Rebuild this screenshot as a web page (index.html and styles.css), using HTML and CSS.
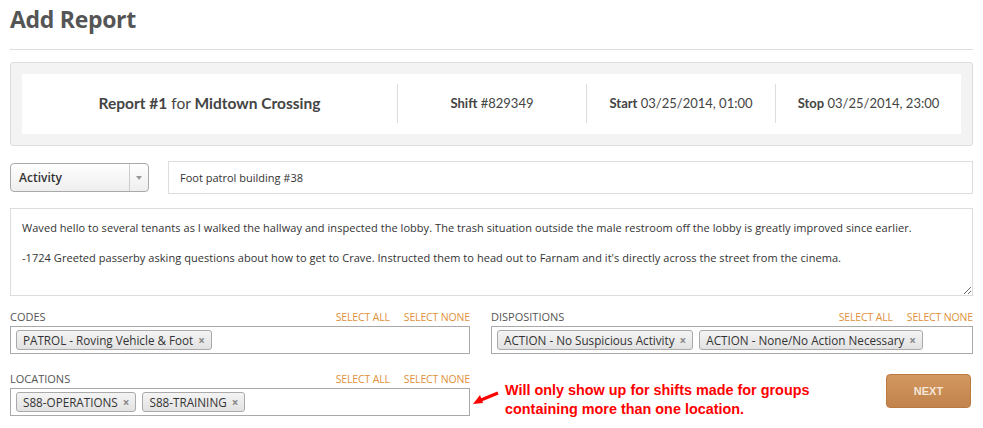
FILE: index.html
```html
<!DOCTYPE html>
<html lang="en">
<head>
    <meta charset="UTF-8">
    <meta name="viewport" content="width=device-width, initial-scale=1.0">
    <title>Add Report</title>
    <link rel="stylesheet" href="styles.css">
</head>
<body>
    <div class="page">
        <h1>Add Report</h1>

        <div class="summary">
            <div class="summary-card">
                <div class="summary-item wide"><b>Report #1</b> for <b>Midtown Crossing</b></div>
                <div class="summary-item"><b>Shift</b> #829349</div>
                <div class="summary-item"><b>Start</b> 03/25/2014, 01:00</div>
                <div class="summary-item last"><b>Stop</b> 03/25/2014, 23:00</div>
            </div>
        </div>

        <div class="entry-row">
            <div class="select">
                <span class="select-value">Activity</span>
                <span class="select-arrow"></span>
            </div>
            <input class="title-input" type="text" value="Foot patrol building #38">
        </div>

        <textarea class="notes" rows="5">Waved hello to several tenants as I walked the hallway and inspected the lobby. The trash situation outside the male restroom off the lobby is greatly improved since earlier.

-1724 Greeted passerby asking questions about how to get to Crave. Instructed them to head out to Farnam and it's directly across the street from the cinema.</textarea>

        <div class="fields">
            <div class="field">
                <div class="field-head">
                    <span class="field-label">CODES</span>
                    <span class="field-links"><a href="#">SELECT ALL</a><a href="#">SELECT NONE</a></span>
                </div>
                <div class="tag-box">
                    <span class="tag">PATROL - Roving Vehicle &amp; Foot <i>&times;</i></span>
                </div>
            </div>
            <div class="field">
                <div class="field-head">
                    <span class="field-label">DISPOSITIONS</span>
                    <span class="field-links"><a href="#">SELECT ALL</a><a href="#">SELECT NONE</a></span>
                </div>
                <div class="tag-box">
                    <span class="tag">ACTION - No Suspicious Activity <i>&times;</i></span>
                    <span class="tag">ACTION - None/No Action Necessary <i>&times;</i></span>
                </div>
            </div>
            <div class="field">
                <div class="field-head">
                    <span class="field-label">LOCATIONS</span>
                    <span class="field-links"><a href="#">SELECT ALL</a><a href="#">SELECT NONE</a></span>
                </div>
                <div class="tag-box">
                    <span class="tag">S88-OPERATIONS <i>&times;</i></span>
                    <span class="tag">S88-TRAINING <i>&times;</i></span>
                </div>
            </div>
            <div class="note-row">
                <svg class="note-arrow" width="28" height="16" viewBox="0 0 28 16">
                    <path d="M26 3 L9 10" stroke="#f00" stroke-width="3" fill="none"/>
                    <path d="M1 14 L8 5 L11 13 Z" fill="#f00"/>
                </svg>
                <p class="note">Will only show up for shifts made for groups<br>containing more than one location.</p>
                <button class="next-btn">NEXT</button>
            </div>
        </div>
    </div>
</body>
</html>
```

FILE: styles.css
```css
body {
    margin: 0;
    padding: 0;
    background-color: #fff;
    color: #444;
    font-family: 'Open Sans', sans-serif;
}

.page {
    width: 963px;
    padding: 0 10px;
}

h1 {
    margin: 0;
    padding: 3px 0 14px;
    font-size: 23px;
    font-weight: 700;
    color: #555;
    letter-spacing: -0.3px;
    border-bottom: 1px solid #ddd;
}

.summary {
    margin-top: 12px;
    padding: 11px;
    background-color: #f3f3f3;
    border: 1px solid #ddd;
    border-radius: 3px;
}

.summary-card {
    display: flex;
    align-items: center;
    height: 60px;
    background-color: #fff;
    font-family: 'Lato', sans-serif;
    font-size: 13px;
    color: #444;
}

.summary-item {
    flex: 0 0 188px;
    text-align: center;
    border-left: 1px solid #ddd;
    line-height: 39px;
    margin-top: -1px;
}

.summary-item.wide {
    flex: 0 0 375px;
    border-left: none;
    font-size: 15.5px;
}

.summary-item.last {
    flex: 1;
}

.summary-item b {
    font-weight: 700;
}

.entry-row {
    display: flex;
    align-items: center;
    gap: 19px;
    margin-top: 15px;
}

.select {
    display: flex;
    width: 137px;
    height: 27px;
    border: 1px solid #aaa;
    border-radius: 4px;
    background: linear-gradient(#fff, #eee);
}

.select-value {
    flex: 1;
    padding-left: 8px;
    line-height: 27px;
    font-size: 12px;
    font-weight: 600;
    color: #333;
}

.select-arrow {
    width: 18px;
    border-left: 1px solid #ccc;
    position: relative;
}

.select-arrow::after {
    content: '';
    position: absolute;
    left: 6px;
    top: 12px;
    border-left: 3px solid transparent;
    border-right: 3px solid transparent;
    border-top: 4px solid #999;
}

.title-input {
    flex: 1;
    height: 33px;
    box-sizing: border-box;
    padding: 0 11px;
    border: 1px solid #ddd;
    font-family: 'Open Sans', sans-serif;
    font-size: 11px;
    color: #333;
}

.notes {
    display: block;
    width: 100%;
    height: 88px;
    box-sizing: border-box;
    margin-top: 14px;
    padding: 11px 11px 8px;
    border: 1px solid #ddd;
    font-family: 'Open Sans', sans-serif;
    font-size: 11px;
    line-height: 15px;
    letter-spacing: 0.05px;
    color: #333;
    resize: vertical;
}

.fields {
    display: grid;
    grid-template-columns: 460px 1fr;
    column-gap: 21px;
    row-gap: 18px;
    margin-top: 14px;
}

.field-head {
    display: flex;
    justify-content: space-between;
    align-items: flex-end;
    height: 16px;
}

.field-label {
    font-size: 11px;
    color: #555;
    margin-bottom: 2px;
}

.field-links a {
    margin-left: 14px;
    font-size: 10.5px;
    letter-spacing: -0.15px;
    color: #e0913a;
    text-decoration: none;
}

.tag-box {
    display: flex;
    gap: 6px;
    height: 28px;
    box-sizing: border-box;
    padding: 3px 5px;
    border: 1px solid #aaa;
}

.tag {
    height: 20px;
    box-sizing: border-box;
    padding: 0 6px;
    border: 1px solid #aaa;
    border-radius: 3px;
    background: linear-gradient(#f4f4f4, #e2e2e2);
    font-size: 11.7px;
    line-height: 18px;
    color: #333;
    white-space: nowrap;
}

.tag i {
    font-style: normal;
    font-weight: 700;
    color: #888;
    margin-left: 2px;
}

.note-row {
    display: flex;
    align-items: flex-start;
    margin-left: -19px;
}

.note-arrow {
    margin-top: 18px;
}

.note {
    margin: 9px 0 0 5px;
    font-family: 'Liberation Sans', Arial, sans-serif;
    font-size: 14.4px;
    font-weight: 700;
    line-height: 19px;
    color: #f00;
}

.next-btn {
    margin: 2px 2px 0 auto;
    width: 85px;
    height: 34px;
    border: 1px solid #b9793f;
    border-radius: 4px;
    background: linear-gradient(#d2985f, #c2834c);
    color: #f4e6d8;
    font-family: 'Liberation Sans', Arial, sans-serif;
    font-size: 11px;
    font-weight: 700;
    cursor: pointer;
}
```
